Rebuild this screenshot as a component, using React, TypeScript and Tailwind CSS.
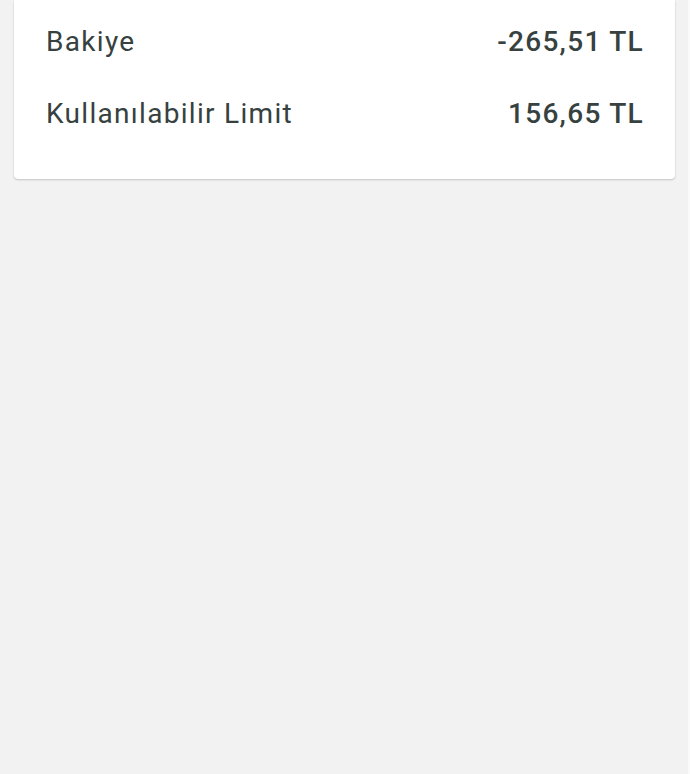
export default function App() {
	const rows = [
		{ label: "Bakiye", value: "-265,51 TL" },
		{ label: "Kullanılabilir Limit", value: "156,65 TL" },
	]

	return (
		<div
			className="min-h-[774px] w-[690px] bg-[#f2f2f2] border-r-2 border-[#fafafa]"
			style={{ fontFamily: "Roboto, 'Noto Sans', sans-serif" }}>
			<div className="ml-[14px] mr-[13px] rounded-b-[4px] bg-white pl-[32px] pr-[31px] pt-[24px] pb-[47px] shadow-[0_1px_2px_rgba(0,0,0,0.18),0_0_1px_rgba(0,0,0,0.12)]">
				{rows.map((row) => (
					<div
						key={row.label}
						className="flex h-[36px] items-center justify-between mb-[36px] last:mb-0 text-[28px] tracking-[1.3px] text-[#364140]">
						<span>{row.label}</span>
						<span className="font-medium">{row.value}</span>
					</div>
				))}
			</div>
		</div>
	)
}
